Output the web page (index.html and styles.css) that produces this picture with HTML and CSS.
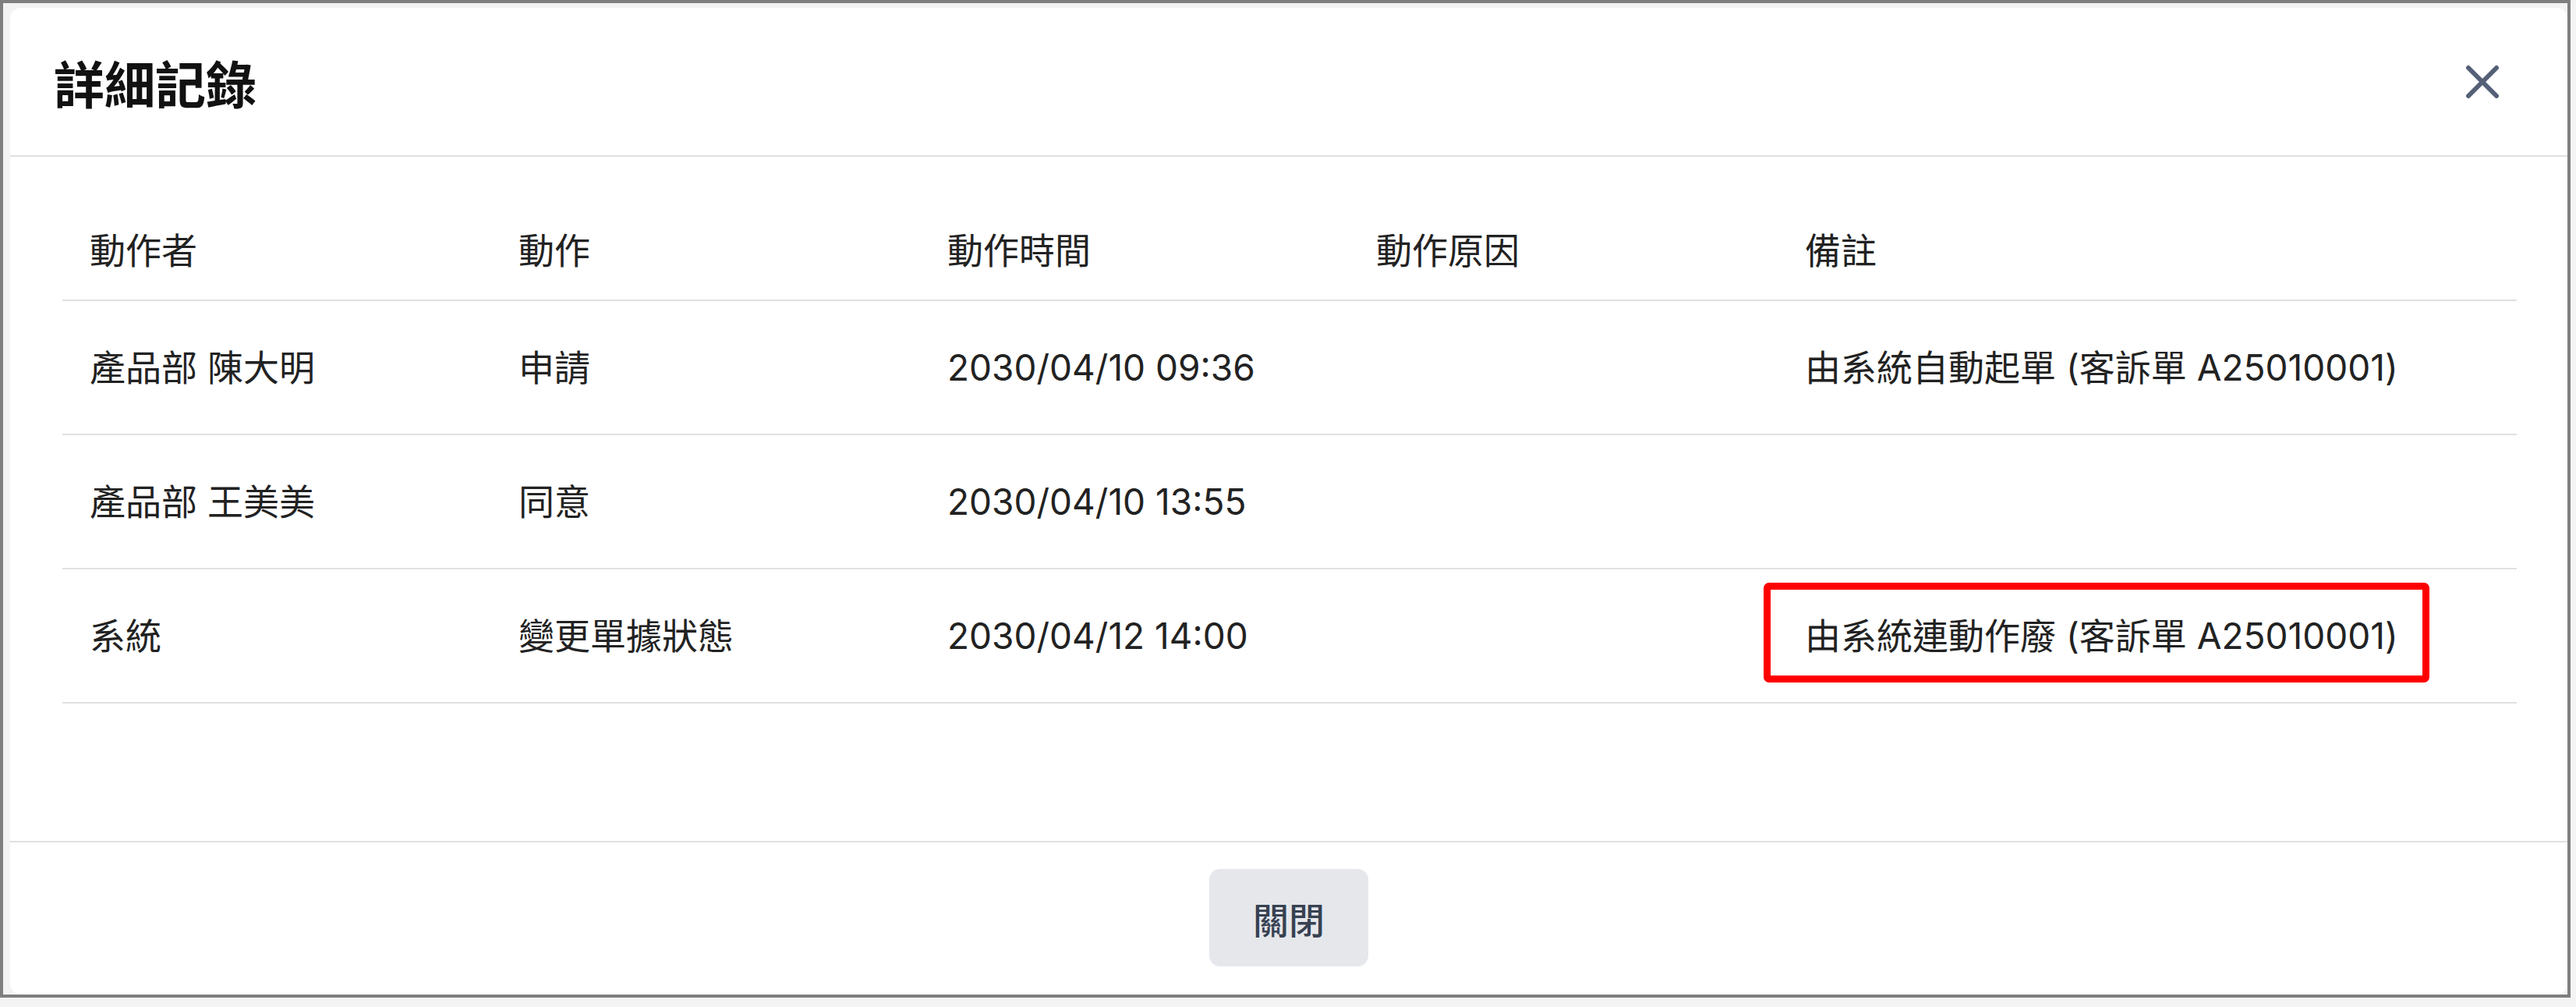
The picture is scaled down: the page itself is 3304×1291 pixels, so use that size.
FILE: index.html
```html
<!DOCTYPE html>
<html lang="zh-Hant">

<head>
    <meta charset="UTF-8">
    <meta name="viewport" content="width=device-width, initial-scale=1.0">
    <title>詳細記錄</title>
    <link rel="stylesheet" href="styles.css">
</head>

<body>
    <div class="frame">
        <div class="modal">
            <div class="modal-header">
                <h2>詳細記錄</h2>
                <button class="close-btn" aria-label="close">
                    <svg width="44" height="44" viewBox="0 0 44 44" fill="none" stroke="currentColor" stroke-width="6" stroke-linecap="round">
                        <path d="M4 4L40 40M40 4L4 40" />
                    </svg>
                </button>
            </div>
            <div class="modal-body">
                <table class="log-table">
                    <colgroup>
                        <col class="col-fixed">
                        <col class="col-fixed">
                        <col class="col-fixed">
                        <col class="col-fixed">
                        <col>
                    </colgroup>
                    <thead>
                        <tr>
                            <th>動作者</th>
                            <th>動作</th>
                            <th>動作時間</th>
                            <th>動作原因</th>
                            <th>備註</th>
                        </tr>
                    </thead>
                    <tbody>
                        <tr>
                            <td>產品部 陳大明</td>
                            <td>申請</td>
                            <td>2030/04/10 09:36</td>
                            <td></td>
                            <td>由系統自動起單 (客訴單 A25010001)</td>
                        </tr>
                        <tr>
                            <td>產品部 王美美</td>
                            <td>同意</td>
                            <td>2030/04/10 13:55</td>
                            <td></td>
                            <td></td>
                        </tr>
                        <tr>
                            <td>系統</td>
                            <td>變更單據狀態</td>
                            <td>2030/04/12 14:00</td>
                            <td></td>
                            <td><span class="highlight">由系統連動作廢 (客訴單 A25010001)</span></td>
                        </tr>
                    </tbody>
                </table>
            </div>
            <div class="modal-footer">
                <button class="btn-close">關閉</button>
            </div>
        </div>
    </div>
</body>

</html>
```

FILE: styles.css
```css
* {
    margin: 0;
    padding: 0;
    box-sizing: border-box;
}

body {
    width: 3304px;
    height: 1291px;
    background: #f4f4f4;
    font-family: Inter, "Noto Sans CJK TC", sans-serif;
    color: #222;
    overflow: hidden;
}

.frame {
    width: 3297px;
    height: 1279px;
    border: 4px solid #7f7f7f;
    background: #f3f3f3;
    padding: 6px 0 0 9px;
    display: flex;
}

.modal {
    flex: 1;
    background: #fff;
    border-radius: 14px;
    display: flex;
    flex-direction: column;
    overflow: hidden;
}

.modal-header {
    height: 191px;
    border-bottom: 2px solid #e0e0e2;
    display: flex;
    align-items: center;
    justify-content: space-between;
    padding: 0 87px 0 56px;
}

.modal-header h2 {
    font-family: "Noto Sans CJK TC", sans-serif;
    font-size: 65px;
    font-weight: 700;
    color: #111;
    line-height: 1;
    margin-top: 2px;
}

.close-btn {
    border: 0;
    background: none;
    color: #556077;
    display: flex;
    cursor: pointer;
}

.modal-body {
    flex: 1;
    padding: 58px 65px 0 67px;
}

.log-table {
    width: 100%;
    border-collapse: collapse;
    table-layout: fixed;
    font-size: 46px;
    line-height: 56px;
}

.col-fixed {
    width: 550px;
}

.log-table th {
    text-align: left;
    font-weight: 400;
    color: #222;
    padding: 34px 35px 35px;
    border-bottom: 2px solid #e0e0e2;
}

.log-table td {
    padding: 57px 35px 57px;
    border-bottom: 2px solid #e0e0e2;
    white-space: nowrap;
}

.highlight {
    position: relative;
}

.highlight::after {
    content: "";
    position: absolute;
    left: -53px;
    right: -40px;
    top: -40px;
    bottom: -32px;
    border: 9px solid #ff0000;
    border-radius: 7px;
}

.modal-footer {
    border-top: 2px solid #e0e0e2;
    padding: 34px 0 36px;
    display: flex;
    justify-content: center;
}

.btn-close {
    height: 125px;
    width: 204px;
    border: 0;
    border-radius: 14px;
    background: #e5e7eb;
    color: #374151;
    font-family: "Noto Sans CJK TC", sans-serif;
    font-size: 46px;
    font-weight: 500;
    cursor: pointer;
}
```
